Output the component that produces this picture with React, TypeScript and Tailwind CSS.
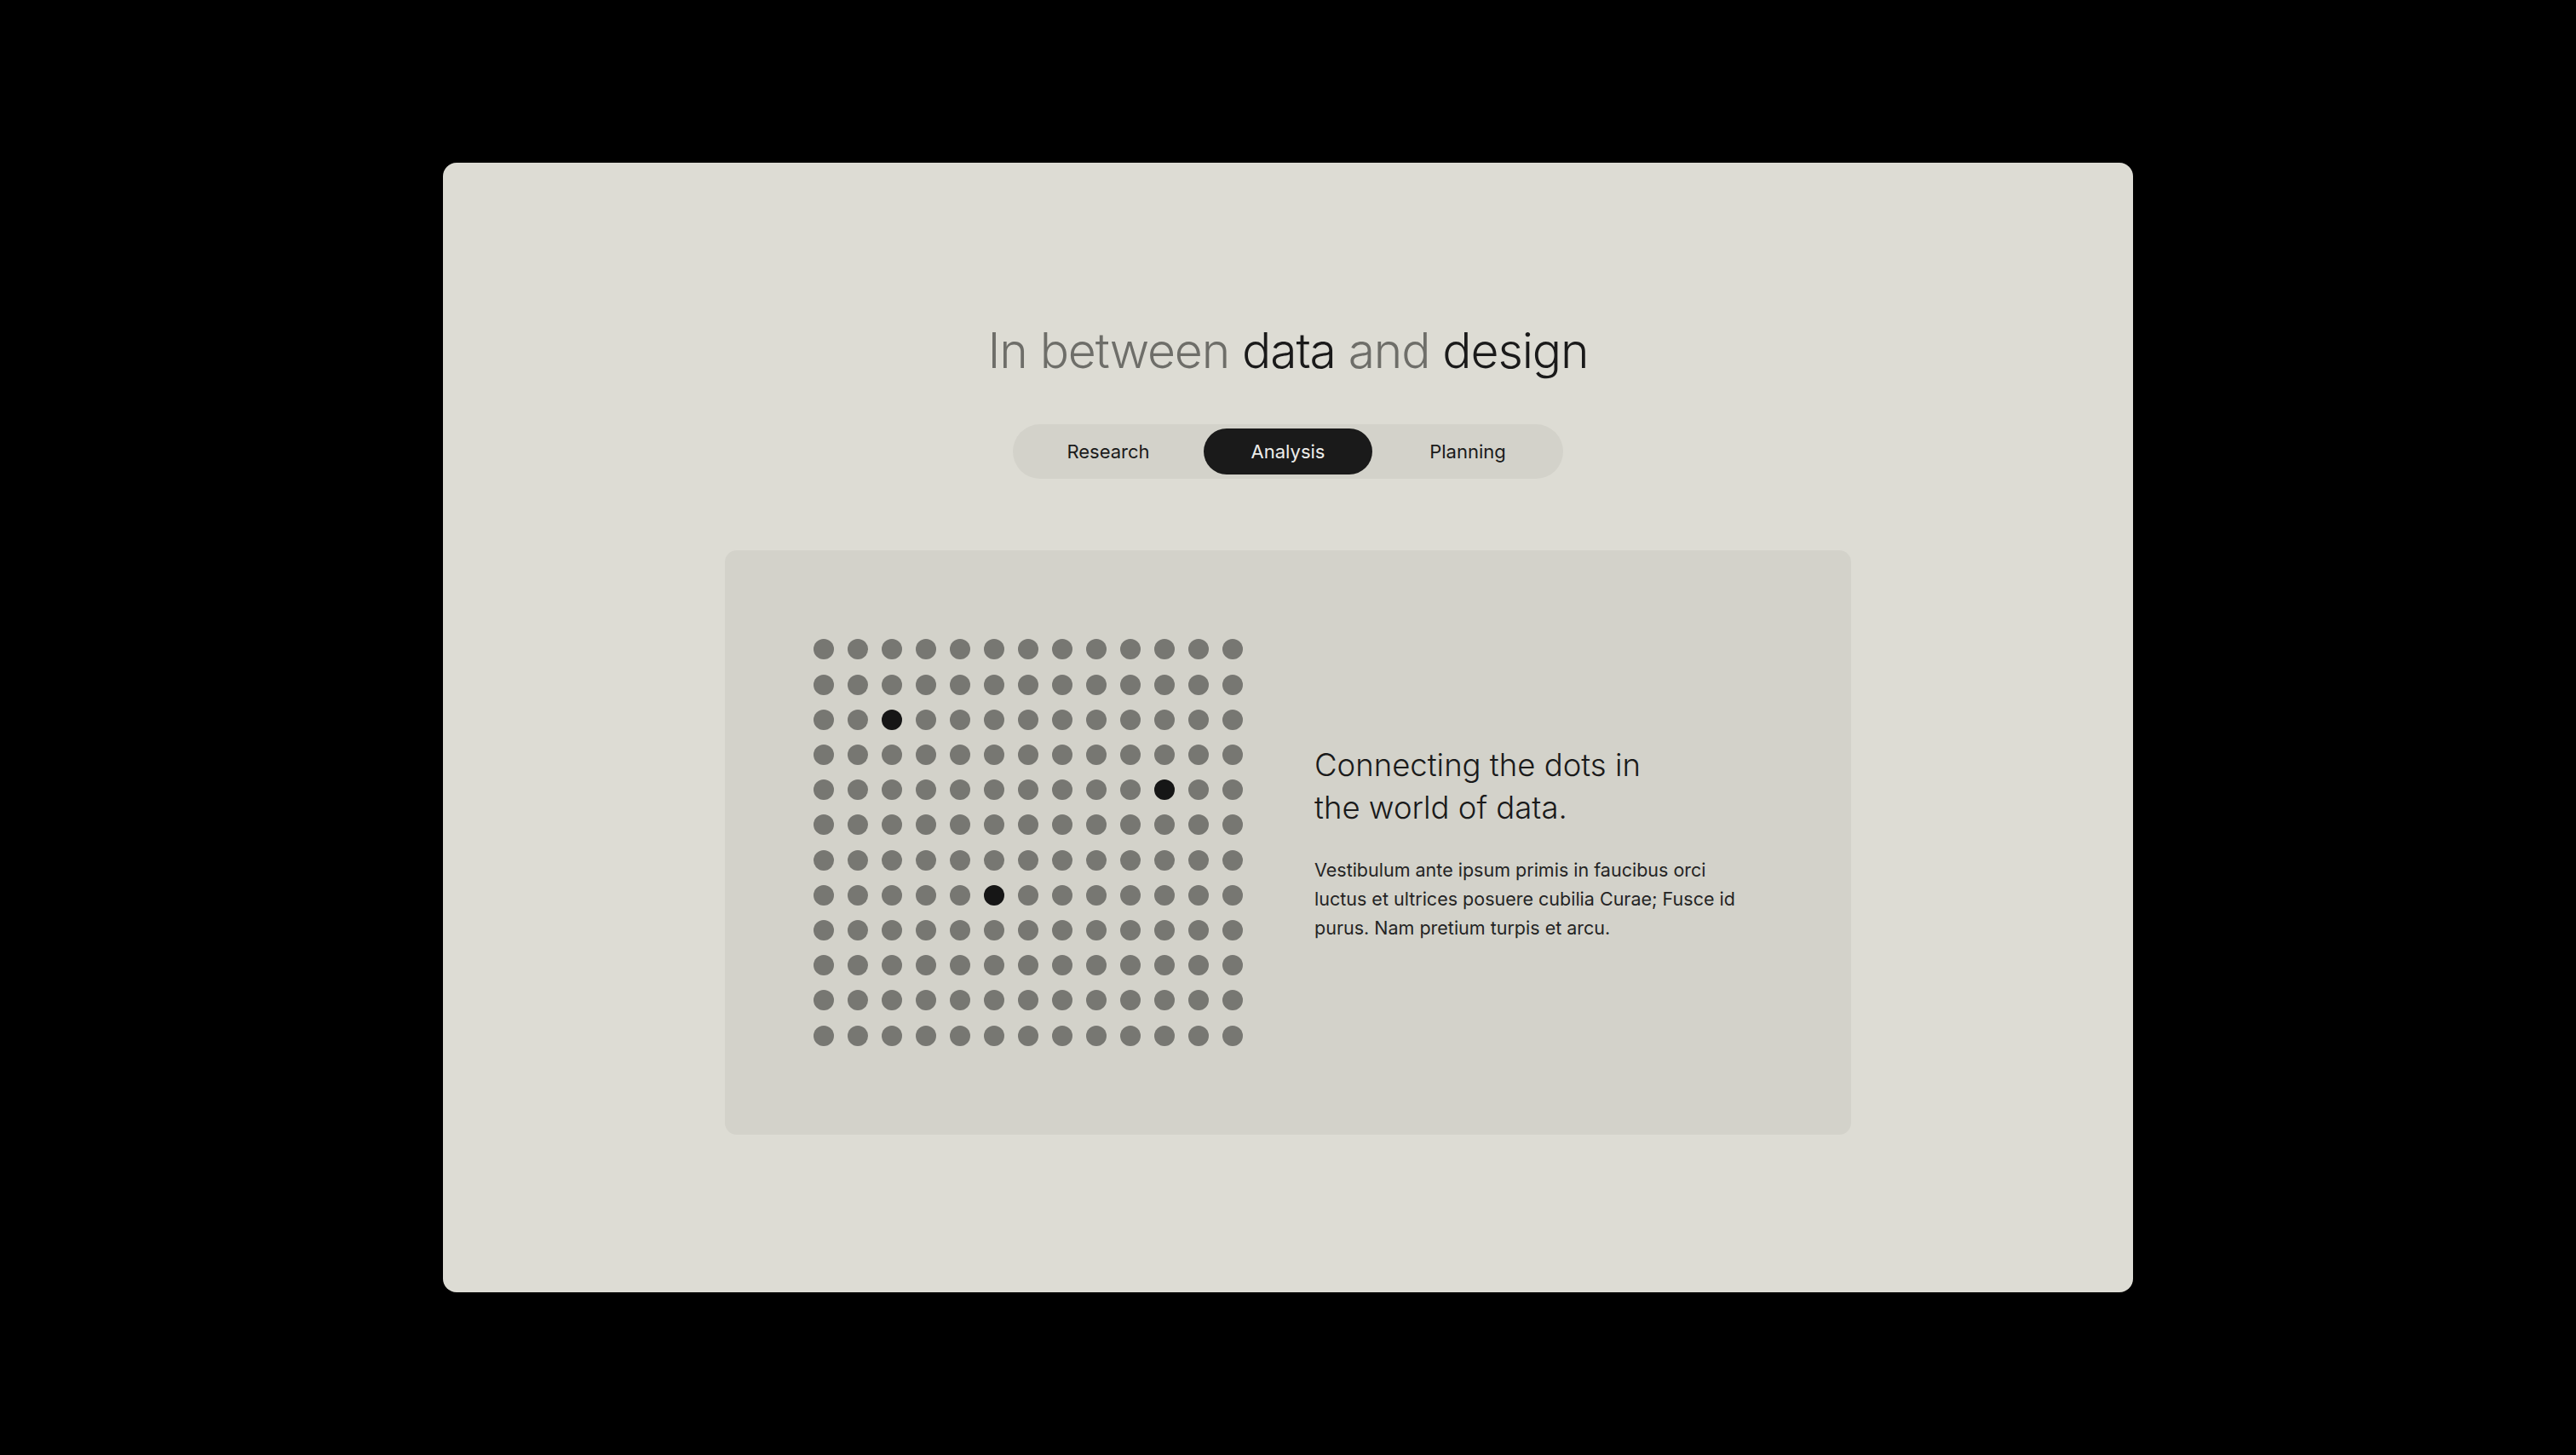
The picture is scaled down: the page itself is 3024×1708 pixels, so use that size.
import { useState } from 'react';

const ROWS = 12;
const COLS = 13;
// row-col of the dots that are filled in dark
const darkDots = new Set(['2-2', '4-10', '7-5']);

const tabs = ['Research', 'Analysis', 'Planning'];

function DotGrid() {
  const dots = [];
  for (let r = 0; r < ROWS; r++) {
    for (let c = 0; c < COLS; c++) {
      const dark = darkDots.has(`${r}-${c}`);
      dots.push(
        <span
          key={`${r}-${c}`}
          className={dark ? 'h-[24px] w-[24px] rounded-full bg-[#161616]' : 'h-[24px] w-[24px] rounded-full bg-[#777772]'}
        />
      );
    }
  }
  return <div className="grid shrink-0 grid-cols-[repeat(13,24px)] gap-x-[16px] gap-y-[17.2px]">{dots}</div>;
}

export default function App() {
  const [active, setActive] = useState('Analysis');

  return (
    <div
      className="flex h-screen w-full items-center justify-center bg-black"
      style={{ fontFamily: 'Inter, "Noto Sans", sans-serif' }}
    >
      <div className="flex h-[1326px] w-[1984px] flex-col items-center rounded-[16px] bg-[#dddcd4] pt-[192px]">
        <h1 className="text-[57px] leading-[57px] font-light tracking-[-0.02em] text-[#6e6e69]">
          In between <span className="text-[#1a1a1a]">data</span> and{' '}
          <span className="text-[#1a1a1a]">design</span>
        </h1>

        <div className="mt-[58px] flex h-[64px] items-center gap-[13px] rounded-full bg-[#d3d2ca] px-[13px]">
          {tabs.map((tab) => (
            <button
              key={tab}
              type="button"
              onClick={() => setActive(tab)}
              className={
                tab === active
                  ? 'h-[54px] w-[198px] rounded-full bg-[#1a1a1a] text-[22px] text-[#ededea]'
                  : 'h-[54px] w-[198px] rounded-full text-[22px] text-[#1a1a1a]'
              }
            >
              {tab}
            </button>
          ))}
        </div>

        <div className="mt-[84px] flex h-[686px] w-[1322px] items-center rounded-[14px] bg-[#d3d2ca] pl-[104px]">
          <DotGrid />
          <div className="ml-[84px]">
            <h2 className="text-[36.5px] leading-[50px] font-light text-[#1a1a1a]">
              Connecting the dots in
              <br />
              the world of data.
            </h2>
            <p className="mt-[31px] w-[500px] text-[21.5px] leading-[34px] text-[#242424]">
              Vestibulum ante ipsum primis in faucibus orci luctus et ultrices posuere cubilia Curae; Fusce id purus.
              Nam pretium turpis et arcu.
            </p>
          </div>
        </div>
      </div>
    </div>
  );
}
